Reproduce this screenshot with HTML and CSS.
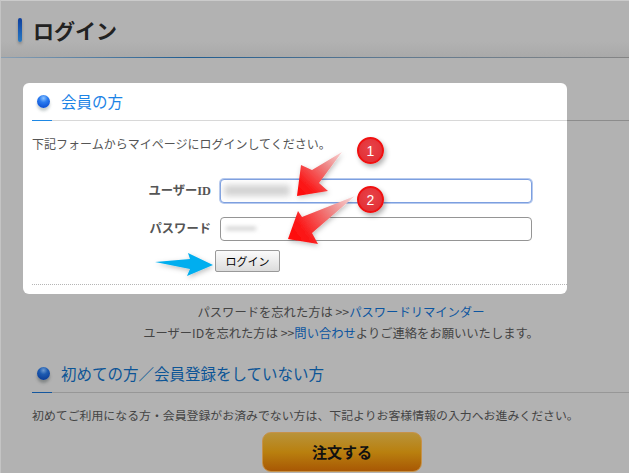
FILE: index.html
```html
<!DOCTYPE html>
<html lang="ja">
<head>
<meta charset="utf-8">
<title>ログイン</title>
<link rel="stylesheet" href="styles.css">
</head>
<body>
<div class="page">
  <header class="title-bar">
    <span class="title-mark"></span>
    <h1 class="title">ログイン</h1>
  </header>

  <section class="card">
    <h2 class="section-head section-head--card"><span class="bullet"></span>会員の方</h2>
    <p class="intro">下記フォームからマイページにログインしてください。</p>
    <form class="login-form">
      <label class="field-label"><span class="latin-serif">ユーザーID</span></label>
      <div class="field field--focus"><span class="blur blur--id"></span></div>
      <label class="field-label">パスワード</label>
      <div class="field"><span class="blur blur--pw"></span></div>
      <button class="login-button" type="button">ログイン</button>
    </form>
    <div class="dotted-rule"></div>
  </section>

  <div class="help">
    <p>パスワードを忘れた方は &gt;&gt;<a class="link">パスワードリマインダー</a></p>
    <p>ユーザーIDを忘れた方は &gt;&gt;<a class="link">問い合わせ</a>よりご連絡をお願いいたします。</p>
  </div>

  <section class="signup">
    <h2 class="section-head section-head--dim"><span class="bullet bullet--dim"></span>初めての方／会員登録をしていない方</h2>
    <p class="signup-text">初めてご利用になる方・会員登録がお済みでない方は、下記よりお客様情報の入力へお進みください。</p>
    <button class="order-button" type="button">注文する</button>
  </section>

  <svg class="annotations" width="629" height="473" viewBox="0 0 629 473" aria-hidden="true">
    <defs>
      <linearGradient id="red1" gradientUnits="userSpaceOnUse" x1="342" y1="152" x2="300" y2="196">
        <stop offset="0" stop-color="#f9d4d4"/>
        <stop offset="0.35" stop-color="#ee8484"/>
        <stop offset="0.8" stop-color="#fb1a1a"/>
        <stop offset="1" stop-color="#ff0808"/>
      </linearGradient>
      <linearGradient id="red2" gradientUnits="userSpaceOnUse" x1="355" y1="196" x2="292" y2="240">
        <stop offset="0" stop-color="#f9dcdc"/>
        <stop offset="0.35" stop-color="#ee8a8a"/>
        <stop offset="0.8" stop-color="#fb1a1a"/>
        <stop offset="1" stop-color="#ff0808"/>
      </linearGradient>
      <filter id="soft" x="-30%" y="-30%" width="160%" height="160%">
        <feDropShadow dx="1" dy="2" stdDeviation="2.5" flood-color="#000" flood-opacity="0.25"/>
      </filter>
    </defs>
    <polygon fill="url(#red1)" filter="url(#soft)" points="342,152 312,170 301,165 297,196 328,191 319,183"/>
    <polygon fill="url(#red2)" filter="url(#soft)" points="355,196 302,217 298,211 288,239 318,244 312,233"/>
    <polygon fill="#00aeef" filter="url(#soft)" points="155,262 190,259 188,253 213,265 187,276 190,269"/>
  </svg>
  <span class="badge badge--one">1</span>
  <span class="badge badge--two">2</span>
</div>
</body>
</html>
```

FILE: styles.css
```css
* { box-sizing: border-box; }
html, body { margin: 0; padding: 0; }
body {
  width: 629px;
  height: 473px;
  overflow: hidden;
  font-family: "Noto Sans CJK JP", "Noto Sans", sans-serif;
  font-size: 12px;
  color: #444;
}
p, h1, h2 { margin: 0; }

.page {
  position: relative;
  width: 629px;
  height: 473px;
  overflow: hidden;
  background: #b2b2b2;
  border-top: 1px solid #cbcbcb;
  border-left: 1px solid #c4c4c4;
}

.title-bar {
  display: flex;
  align-items: center;
  height: 57px;
  padding: 6px 0 6px 17px;
  background: linear-gradient(to bottom, #b2b2b2 0, #b2b2b2 70%, #a9a9a9 100%);
  position: relative;
}
.title-bar::after {
  content: "";
  position: absolute;
  left: 0;
  right: 0;
  bottom: 0;
  height: 1px;
  background: linear-gradient(to right, #8ba0b3 0, #1f5c90 30%, #5d7890 60%, #858585 100%);
}
.title-mark {
  width: 4px;
  height: 24px;
  border-radius: 2px;
  background: linear-gradient(to bottom, #0f3f9a 0, #1a5cb4 50%, #2a7ac0 100%);
  box-shadow: 0 2px 3px rgba(0, 0, 0, 0.25);
}
.title {
  margin-left: 11px;
  font-size: 21px;
  font-weight: 700;
  line-height: 30px;
  color: #222;
}

.section-head {
  position: relative;
  display: flex;
  align-items: center;
  height: 38px;
  padding: 0 0 1px 29px;
  font-size: 15.5px;
  font-weight: 400;
  border-bottom: 1px solid #d8d8d8;
}
.section-head::before {
  content: "";
  position: absolute;
  left: 0;
  bottom: -1px;
  width: 20px;
  height: 1px;
  background: #1e88e5;
}
.section-head--card { color: #1d84e6; margin-left: 8px; }
.section-head--card::after {
  content: "";
  position: absolute;
  left: 100%;
  bottom: -1px;
  width: 62px;
  height: 1px;
  background: #8c8c8c;
}
.section-head--dim {
  color: #0d5596;
  border-bottom-color: #979797;
}
.section-head--dim::before { background: #14579e; }

.bullet {
  position: absolute;
  left: 5px;
  top: 12px;
  width: 13px;
  height: 13px;
  border-radius: 50%;
  background: radial-gradient(circle at 50% 25%, #8ec4ff 0, #2a7cf0 35%, #0e52d4 80%);
  box-shadow: 0 3px 3px rgba(110, 130, 130, 0.4);
}
.bullet--dim {
  background: radial-gradient(circle at 50% 25%, #6d9ad0 0, #1d5bb0 35%, #0b3e98 80%);
  box-shadow: 0 3px 3px rgba(60, 70, 70, 0.4);
}

.card {
  position: relative;
  width: 544px;
  margin: 25px 0 0 22px;
  padding: 0 0 9px 1px;
  background: #fff;
  border-radius: 6px;
}
.intro {
  margin: 13px 0 0 8px;
  line-height: 20px;
  color: #555;
}
.login-form {
  display: grid;
  grid-template-columns: 179px 312px;
  grid-auto-rows: 24px;
  column-gap: 9px;
  row-gap: 14px;
  align-items: center;
  margin: 25px 0 0 8px;
}
.field-label {
  text-align: right;
  font-weight: 700;
  font-size: 12.3px;
  line-height: 20px;
  padding-bottom: 2px;
  color: #555;
}
.latin-serif { font-family: "Liberation Serif", "Noto Sans CJK JP", serif; }
.field {
  position: relative;
  height: 24px;
  border: 1px solid #959595;
  border-radius: 4px;
  background: #fff;
}
.field--focus {
  border-color: #7c9fe0;
  box-shadow: 0 0 0 1px rgba(124, 159, 224, 0.55);
}
.blur {
  position: absolute;
  display: block;
  background: #d2d2d2;
  filter: blur(3px);
}
.blur--id { left: 3px; top: 5px; width: 66px; height: 11px; }
.blur--pw { left: 5px; top: 9px; width: 30px; height: 3px; background: #c4c4c4; filter: blur(2px); }

.login-button {
  grid-column: 2;
  align-self: start;
  width: 65px;
  height: 22px;
  margin: -5px 0 0 -5px;
  padding: 0;
  border: 1px solid #999;
  border-radius: 2px;
  background: linear-gradient(to bottom, #fbfbfb, #dcdcdc);
  font-family: "Noto Sans CJK JP", sans-serif;
  font-size: 11px;
  color: #000;
}
.dotted-rule {
  margin: 5px 0 0 8px;
  border-top: 1px dotted #b5b5b5;
}

.help {
  margin-top: 8px;
  padding-left: 52px;
  text-align: center;
  font-size: 12.3px;
  line-height: 21px;
  color: #444;
}
.link { color: #0b55a0; }

.signup { margin: 11px 0 0 31px; width: 597px; }
.signup-text {
  margin-top: 12px;
  font-size: 11.9px;
  line-height: 20px;
  color: #444;
}
.order-button {
  display: block;
  width: 160px;
  height: 40px;
  margin: 7px 0 0 230px;
  padding: 0 0 2px;
  border: 1px solid #c6924a;
  border-radius: 9px;
  background: linear-gradient(to bottom, #b8933a 0, #b9800f 50%, #a85804 100%);
  font-family: "Noto Sans CJK JP", sans-serif;
  font-size: 15px;
  font-weight: 700;
  color: #111;
}

.annotations {
  position: absolute;
  left: -1px;
  top: -1px;
  pointer-events: none;
}
.badge {
  position: absolute;
  left: 356px;
  display: flex;
  align-items: center;
  justify-content: center;
  width: 27px;
  height: 27px;
  border: 2px solid #f01010;
  border-radius: 50%;
  background: radial-gradient(circle at 50% 40%, #e8444a 0, #e12a30 100%);
  box-shadow: 2px 3px 5px rgba(0, 0, 0, 0.3);
  color: #fff;
  font-family: "Liberation Sans", sans-serif;
  font-size: 14px;
}
.badge--one { top: 136px; }
.badge--two { top: 185px; }
```
